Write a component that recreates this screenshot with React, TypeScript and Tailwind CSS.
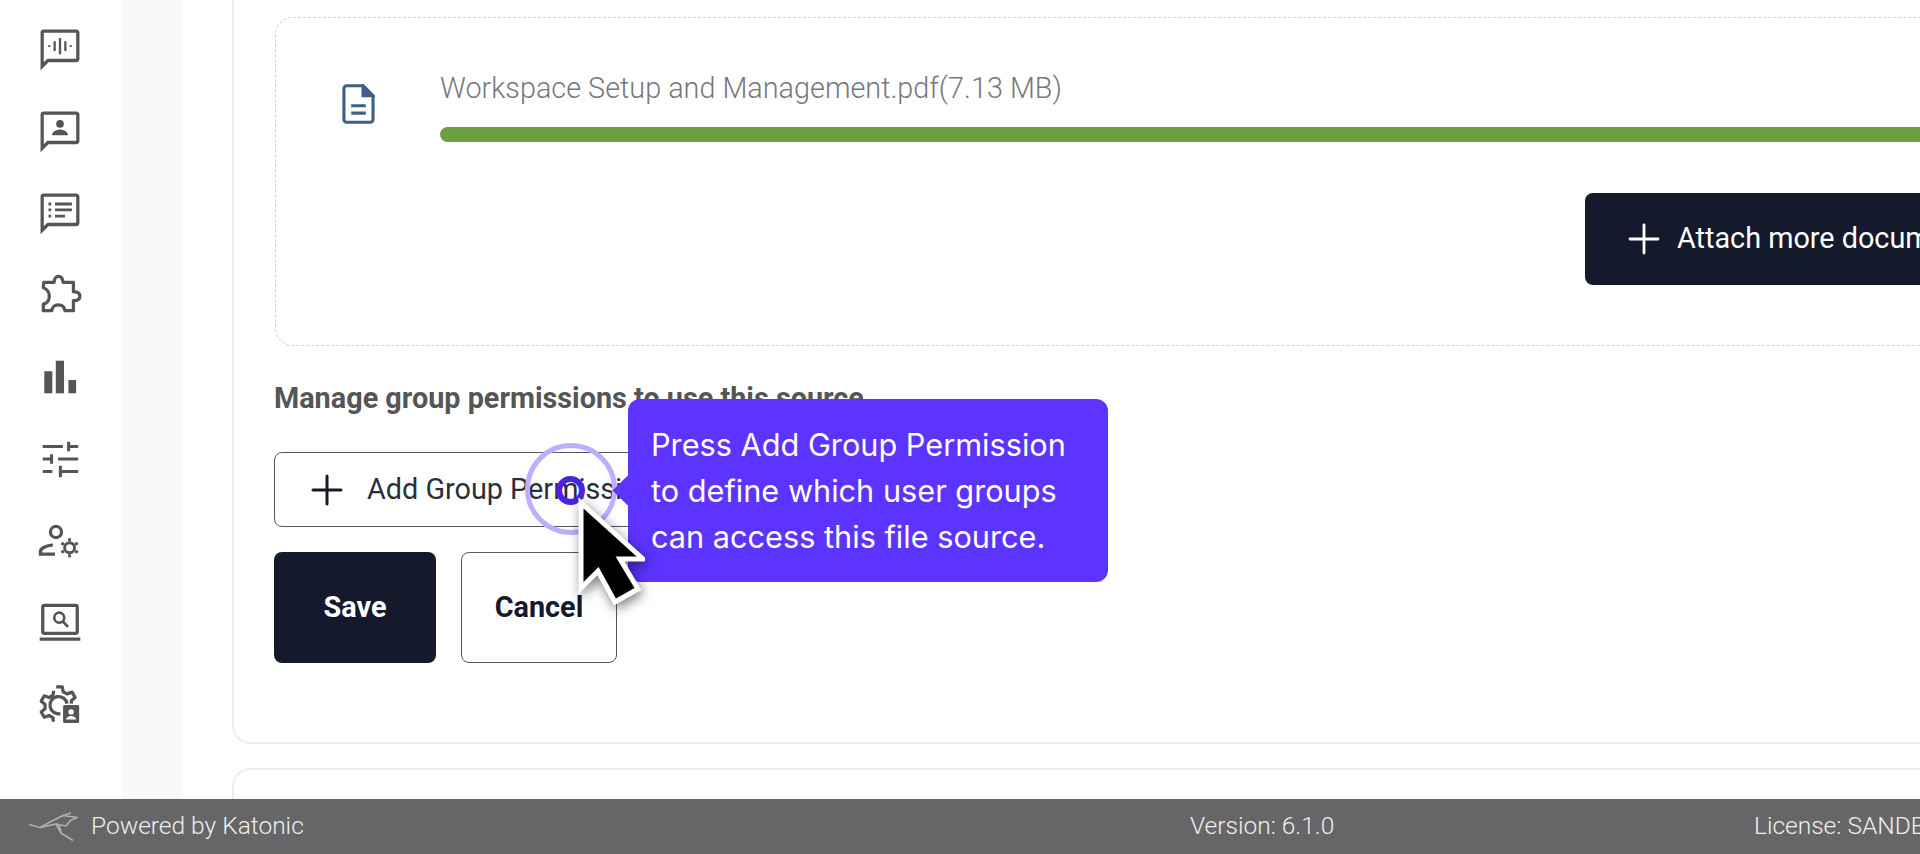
import { Plus } from "lucide-react";
import type { ReactNode } from "react";

const chatPath = "M2.7 21V3.5a.8.8 0 0 1 .8-.8h17a.8.8 0 0 1 .8.8v13.7a.8.8 0 0 1-.8.8H5.7L2.7 21Z";

function NavIcon({ children }: { children: ReactNode }) {
  return (
    <div className="flex h-[82px] items-center justify-center">
      <svg viewBox="0 0 24 24" className="h-[46px] w-[46px]" fill="none" stroke="#555558" strokeWidth="1.7">
        {children}
      </svg>
    </div>
  );
}

function Sidebar() {
  return (
    <div className="w-[122px] shrink-0 bg-white pt-[8px] pr-[2px]">
      <NavIcon>
        <path d={chatPath} />
        <path d="M6.4 10v.9M9.2 8v5M12 6.3v8.4M14.8 8v5M17.6 10v.9" strokeWidth="1.2" />
      </NavIcon>
      <NavIcon>
        <path d={chatPath} />
        <circle cx="12" cy="8.3" r="2" fill="#555558" stroke="none" />
        <path d="M7.8 14.2c0-1.9 2.6-3 4.2-3s4.2 1.1 4.2 3Z" fill="#555558" stroke="none" />
      </NavIcon>
      <NavIcon>
        <path d={chatPath} />
        <path d="M9.4 7.3h8.8M9.4 10.4h8.8M9.4 13.6h5.2" strokeWidth="1.5" />
        <path d="M6 7.3h1.4M6 10.4h1.4M6 13.6h1.4" strokeWidth="1.5" />
      </NavIcon>
      <NavIcon>
        <path d="M3.5 5.4H8.9C9 3.5 10 2.25 11.2 2.25S13.4 3.5 13.6 5.4H19V10.3C21 10.4 22.4 11.2 22.4 12.6S21 14.9 19 15V20.2H14.6C14.3 18.4 12.9 17.2 11.1 17.2S7.9 18.4 7.7 20.2H3.3V16.7C5.2 16.4 6.4 14.8 6.4 12.7S5.2 8.7 3.3 8.2Z" strokeLinejoin="round" />
      </NavIcon>
      <NavIcon>
        <rect x="3.8" y="9" width="4.2" height="11.5" fill="#555558" stroke="none" />
        <rect x="9.8" y="3.5" width="4.3" height="17" fill="#555558" stroke="none" />
        <rect x="16.4" y="13.6" width="4" height="6.9" fill="#555558" stroke="none" />
      </NavIcon>
      <NavIcon>
        <path d="M3 5.5h10.5M16.5 3v5M16.5 5.5h5M7.6 9.5v5M3 12h4.6M11 12h10.5M3 18.5h5M12.2 15.5v6M12.2 18.5h9.3" strokeWidth="1.6" />
      </NavIcon>
      <NavIcon>
        <circle cx="9.9" cy="7.3" r="2.9" />
        <path d="M8.3 14C4.8 14.4 1.8 15.8 1.8 17.5V18.8H9.4" />
        <circle cx="17" cy="15.5" r="2.6" strokeWidth="1.5" />
        <path d="M21.3 13L19.9 13.8M21.3 18L19.9 17.2M17 20.5V18.9M12.7 18L14.1 17.2M12.7 13L14.1 13.8M17 10.5V12.1" strokeWidth="1.5" />
      </NavIcon>
      <NavIcon>
        <rect x="3" y="2.8" width="18" height="14.6" rx=".8" />
        <path d="M1.4 20.4h21.2" />
        <circle cx="11.6" cy="9.2" r="2.6" strokeWidth="1.4" />
        <path d="M13.5 11.2l2.7 2.8" strokeWidth="1.4" />
      </NavIcon>
      <NavIcon>
        <path d="M12.2 16.5a4.5 4.5 0 1 1 3.5-5.2M10 2.6h3.2l.5 2.6 2 1 2.6-.9 1.6 2.8-2 1.7.1 1.5M8.6 20.7l-.3-2.1-2-1.1-2.5.9-1.6-2.8 2-1.7v-2.2l-2-1.7 1.6-2.8 2.5.9 2-1.1.4-2.4" strokeLinejoin="round" />
        <rect x="13.6" y="12" width="8.4" height="9.4" rx=".8" fill="#555558" stroke="none" />
        <circle cx="17.8" cy="15.6" r="1.4" fill="#fff" stroke="none" />
        <path d="M15.2 19.6c0-1.3 1.5-1.9 2.6-1.9s2.6.6 2.6 1.9Z" fill="#fff" stroke="none" />
      </NavIcon>
    </div>
  );
}

function UploadBox() {
  return (
    <div className="ml-[1px] h-[329px] w-[1800px] rounded-[18px] border border-dashed border-[#d4d4d6]">
      <div className="flex pt-[54px]">
        <div className="flex w-[164px] justify-center pt-[12px]">
          <svg viewBox="0 0 36 44" className="h-[40px] w-[33px]" fill="none" stroke="#3f5f87" strokeWidth="3.4">
            <path d="M5 2h18l11 11v26a3 3 0 0 1-3 3H5a3 3 0 0 1-3-3V5a3 3 0 0 1 3-3Z" strokeLinejoin="round" />
            <path d="M23 2v11h11Z" fill="#3f5f87" />
            <path d="M10 24h16M10 32h16" />
          </svg>
        </div>
        <div className="flex-1">
          <p className="-mt-[1px] text-[28.8px] leading-[34px] font-light text-[#77777a]">Workspace Setup and Management.pdf(7.13 MB)</p>
          <div className="mt-[22px] h-[15px] rounded-full bg-[#6ca03e]" />
        </div>
      </div>
      <div className="mt-[51px] flex pl-[1309px]">
        <button className="flex h-[92px] w-[460px] items-center gap-[9px] rounded-[8px] bg-[#141a2b] pl-[35px] text-[28.8px] whitespace-nowrap text-white">
          <Plus size={48} strokeWidth={1.4} className="shrink-0" />
          Attach more documents
        </button>
      </div>
    </div>
  );
}

function Tour() {
  return (
    <>
      <div className="absolute top-[443px] left-[525px] h-[92px] w-[92px] rounded-full border-[5px] border-[#bfaeff]" />
      <div className="absolute top-[476px] left-[556px] h-[29px] w-[29px] rounded-full border-[6px] border-[#4a24e0]" />
      <div className="absolute top-[399px] left-[628px] w-[480px] rounded-[12px] bg-[#5c33ff] px-[23px] pt-[23px] pb-[22px] font-['Inter',sans-serif] text-[30.7px] leading-[46px] text-white">
        <div className="absolute top-[81px] left-[-11px] h-[21px] w-[21px] rotate-45 bg-[#5c33ff]" />
        <p className="relative whitespace-pre-line">
          {"Press Add Group Permission\nto define which user groups\ncan access this file source."}
        </p>
      </div>
      <svg viewBox="0 0 80 120" className="absolute top-[495px] left-[565px] h-[120px] w-[80px] drop-shadow-[2px_4px_6px_rgba(0,0,0,0.5)]">
        <path d="M16 8V93L33 76L50 107L73 94L55 64L78 64Z" fill="#000" stroke="#fff" strokeWidth="5" strokeLinejoin="miter" />
      </svg>
    </>
  );
}

export default function App() {
  return (
    <div className="relative flex h-[854px] w-[1920px] flex-col overflow-hidden bg-white font-['Roboto',sans-serif]">
      <div className="flex min-h-0 flex-1">
        <Sidebar />
        <div className="w-[61px] shrink-0 bg-[#f9f9f9]" />
        <div className="min-w-0 flex-1 overflow-hidden pl-[49px]">
          <div className="h-[744px] rounded-bl-[18px] border-b-2 border-l-2 border-[#ededee] pt-[17px] pl-[40px]">
            <UploadBox />
            <p className="mt-[35px] text-[28.8px] leading-[34px] font-bold whitespace-nowrap text-[#555558]">
              Manage group permissions to use this source
            </p>
            <button className="mt-[37px] flex h-[75px] w-[400px] items-center gap-[16px] rounded-[8px] border border-[#555862] pl-[28px] text-[28.8px] whitespace-nowrap text-[#2a2f3f]">
              <Plus size={48} strokeWidth={1.5} className="shrink-0 text-[#141a2b]" />
              Add Group Permission
            </button>
            <div className="mt-[25px] flex gap-[25px]">
              <button className="h-[111px] w-[162px] rounded-[8px] bg-[#141a2b] text-[28.8px] font-bold text-white">Save</button>
              <button className="h-[111px] w-[156px] rounded-[8px] border border-[#555862] text-[28.8px] font-bold text-[#141a2b]">Cancel</button>
            </div>
          </div>
          <div className="mt-[24px] h-[40px] rounded-tl-[18px] border-t-2 border-l-2 border-[#ededee]" />
        </div>
      </div>
      <footer className="flex h-[55px] shrink-0 items-center bg-[#666668] text-[24.5px] font-light text-[#eeeeee]">
        <div className="flex w-[1190px] shrink-0 items-center pl-[28px]">
          <svg viewBox="0 0 50 32" className="mr-[13px] h-[32px] w-[50px]" fill="none" stroke="#b0b0b2" strokeWidth="1.6">
            <path d="M1 13.5L12 16.5L25 9.5L35 4.5L49 6.5L42 10L38 15" />
            <path d="M12 16.5L28 13L33 22L45 29.5" />
            <path d="M35 4.5L43 2M28 13L38 15M33 22L31 14" />
          </svg>
          Powered by Katonic
        </div>
        <div className="w-[564px] shrink-0">Version: 6.1.0</div>
        <div className="whitespace-nowrap">License: SANDBOX</div>
      </footer>
      <Tour />
    </div>
  );
}
